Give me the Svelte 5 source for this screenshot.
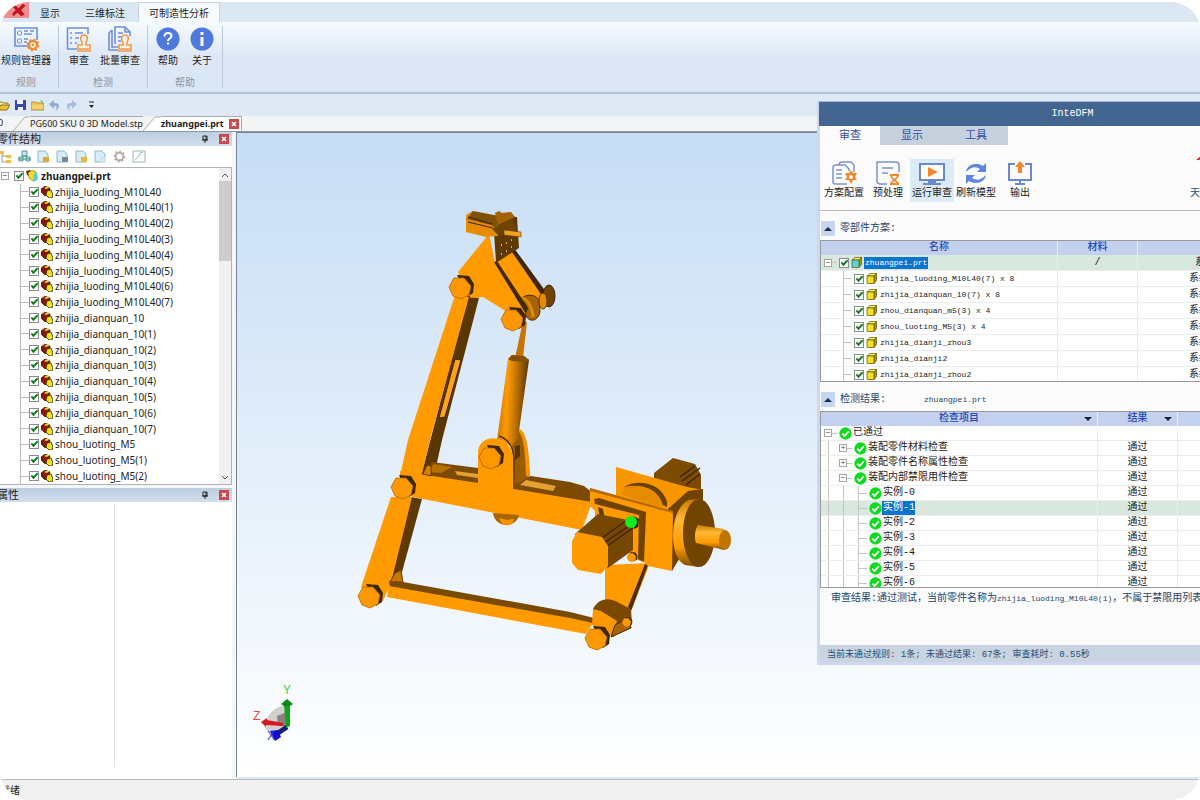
<script lang="ts">
  let ribbonTab = $state('可制造性分析');
  let dialogTab = $state('审查');
  let selectedPart = $state('zhuangpei.prt');
  let selectedItem = $state('实例-1');

  const ribbonGroups = [
    { name: '规则', tools: [{ label: '规则管理器', icon: 'rules' }] },
    {
      name: '检测',
      tools: [
        { label: '审查', icon: 'review' },
        { label: '批量审查', icon: 'batch' },
      ],
    },
    {
      name: '帮助',
      tools: [
        { label: '帮助', icon: 'help' },
        { label: '关于', icon: 'about' },
      ],
    },
  ];

  const numbered = (name: string, from: number, to: number) =>
    Array.from({ length: to - from + 1 }, (_, i) => (from + i === 0 ? name : `${name}(${from + i})`));

  const parts = [
    ...numbered('zhijia_luoding_M10L40', 0, 7),
    ...numbered('zhijia_dianquan_10', 0, 7),
    ...numbered('shou_luoting_M5', 0, 2),
  ];

  const schemes = [
    'zhijia_luoding_M10L40(7) x 8',
    'zhijia_dianquan_10(7) x 8',
    'zhou_dianquan_m5(3) x 4',
    'shou_luoting_M5(3) x 4',
    'zhijia_dianji_zhou3',
    'zhijia_dianji2',
    'zhijia_dianji_zhou2',
  ];

  const results = [
    { label: '已通过', level: 0, sign: '−', result: '' },
    { label: '装配零件材料检查', level: 1, sign: '+', result: '通过' },
    { label: '装配零件名称属性检查', level: 1, sign: '+', result: '通过' },
    { label: '装配内部禁限用件检查', level: 1, sign: '−', result: '通过' },
    ...[0, 1, 2, 3, 4, 5, 6].map((n) => ({ label: `实例-${n}`, level: 2, sign: '', result: '通过' })),
  ];

  const dialogTools = [
    { label: '方案配置', icon: 'config' },
    { label: '预处理', icon: 'prepare' },
    { label: '运行审查', icon: 'run' },
    { label: '刷新模型', icon: 'refresh' },
    { label: '输出', icon: 'output' },
  ];
</script>

{#snippet gear(x: number, y: number, hole: string)}
  <g transform="translate({x} {y})">
    <circle r="4" fill={hole} stroke="#f58a2b" stroke-width="2.4" />
    <circle r="5.4" fill="none" stroke="#f58a2b" stroke-width="1.8" stroke-dasharray="2.1 2.1" />
    <circle r="1.3" fill="#f58a2b" />
  </g>
{/snippet}

{#snippet stamp(x: number, y: number)}
  <path
    transform="translate({x} {y})"
    d="M1 15v-4h4V8C3 6 3 1 7 1s4 5 2 7v3h4v4zM0 17h14"
    fill="#fff3e6"
    stroke="#f29a4a"
    stroke-width="1.6"
  />
{/snippet}

{#snippet toolIcon(name: string)}
  <svg class="tool-icon" viewBox="0 0 26 26" width="26" height="26" fill="none" aria-hidden="true">
    {#if name === 'rules'}
      <path d="M15 20H2V2h22v12" stroke="#6d8fdc" stroke-width="1.6" />
      <rect x="4.500" y="5" width="4" height="4" rx="1" stroke="#6d8fdc" />
      <rect x="4.500" y="13" width="4" height="4" rx="1" stroke="#6d8fdc" />
      <path d="M11 5h4m2 0h4M11 8h8M11 13h4M11 16h3" stroke="#6d8fdc" stroke-width="1.4" />
      {@render gear(20, 19, '#fff')}
    {:else if name === 'review'}
      <path d="M11 23H1.500V2H22v6" stroke="#6d8fdc" stroke-width="1.6" />
      <path d="M4 7h2m3 0h8M4 12h2m3 0h4M4 17h2m3 0h2" stroke="#6d8fdc" stroke-width="1.5" />
      {@render stamp(11, 8)}
    {:else if name === 'batch'}
      <path d="M11 24H2V7l3-3M5 4v17h7M8 18V1h10l5 5v4M18 1v5h5" stroke="#6d8fdc" stroke-width="1.6" />
      <path d="M11 7h5M11 11h4M11 15h3" stroke="#6d8fdc" stroke-width="1.500" />
      {@render stamp(11, 8)}
    {:else if name === 'help'}
      <circle cx="13" cy="13" r="11.500" fill="#4f79dd" />
      <path d="M9.500 10.500c0-5 7-4.500 7-.5 0 2.500-3.500 2.500-3.500 5m0 1.500v2" stroke="#fff" stroke-width="2" />
    {:else if name === 'about'}
      <circle cx="13" cy="13" r="11.500" fill="#4f79dd" />
      <path d="M13 6v3m0 2v9" stroke="#fff" stroke-width="3" />
    {:else if name === 'config'}
      <path d="M16 24H4c-1.500 0-2-.5-2-2V8c0-2 1-3 3-3h9l4 4v2M8 5c0-2 1-3 3-3h9l3 3v7" stroke="#7d92cf" stroke-width="1.500" />
      <path d="M5 10h6M5 14h6M5 18h6" stroke="#7d92cf" stroke-width="1.400" />
      <path d="M20 10l2 3h4l-2 4 2 3h-4l-2 4-2-4h-4l2-3-2-4h4z" fill="#f5862a" />
      <circle cx="20" cy="17" r="2" fill="#fff" />
    {:else if name === 'prepare'}
      <path d="M12 24H5c-2 0-3-1-3-3V2h19c2 0 3 1 3 3v7" stroke="#7d92cf" stroke-width="1.500" />
      <path d="M7 8h11M7 13h6" stroke="#7d92cf" stroke-width="1.500" />
      <path d="M15 15h9M15 24h9M16 15c0 4 3 3 3 5s-3 1-3 4m7-9c0 4-3 3-3 5s3 1 3 4" stroke="#f5862a" stroke-width="1.800" />
    {:else if name === 'run'}
      <rect x="1" y="4" width="24" height="16" fill="#fff" stroke="#6d88d2" stroke-width="2" />
      <path d="M9 7l10 5-10 5z" fill="#f5862a" />
      <path d="M9 22h8M4 24h18" stroke="#6d88d2" stroke-width="2" />
    {:else if name === 'refresh'}
      <path d="M3 12C4 4 14 2 20 6l3-3v9h-9l3-3c-5-3-9-2-14 3zM23 15c-1 8-11 10-17 6l-3 3v-9h9l-3 3c5 3 9 2 14-3z" fill="#5d86e0" />
    {:else if name === 'output'}
      <path d="M8 4H2v16h22V4h-6" stroke="#6d88d2" stroke-width="2" />
      <path d="M8 24h10M13 20v4" stroke="#6d88d2" stroke-width="2" />
      <path d="M13 1l5 6h-3v6h-4V7H8z" fill="#f5862a" />
    {/if}
  </svg>
{/snippet}

{#snippet pin()}
  <svg viewBox="0 0 8 8" width="8" height="8" aria-hidden="true">
    <path d="M2 1h4v4H2zM1 5h6M4 5v3M5 1v4" fill="none" stroke="#222" />
  </svg>
{/snippet}

{#snippet cross()}
  <svg viewBox="0 0 10 10" width="10" height="10" aria-hidden="true">
    <path d="M3 3l4 4M7 3L3 7" stroke="#fff" stroke-width="1.6" />
  </svg>
{/snippet}

{#snippet panelHeader(title: string)}
  <header class="panel-header">
    <h2>{title}</h2>
    <button class="pin" aria-label="固定">{@render pin()}</button>
    <button class="close" aria-label="关闭">{@render cross()}</button>
  </header>
{/snippet}

{#snippet passed()}
  <svg viewBox="0 0 14 14" width="13" height="13" aria-hidden="true">
    <circle cx="7" cy="7" r="6.600" fill="#0cdc1c" />
    <path d="M3.500 7.200l2.500 2.400 4.600-5" fill="none" stroke="#fff" stroke-width="1.900" />
  </svg>
{/snippet}

{#snippet cube(front: string)}
  <svg viewBox="0 0 11 11" width="11" height="11" aria-hidden="true">
    <path d="M1 3l3-2.500h6.500L8 3z" fill="#fff36b" stroke="#5a5200" stroke-width=".7" />
    <path d="M8 3l2.500-2.500v7L8 10.500z" fill="#b59b00" stroke="#5a5200" stroke-width=".7" />
    <path d="M1 3h7v7.500H1z" fill={front} stroke="#5a5200" stroke-width=".7" />
  </svg>
{/snippet}

{#snippet bolt(x: number, y: number, r: number)}
  <g transform="translate({x} {y}) scale({r / 12})">
    <path d="M-4-12L8-11l5 8-1 9-6 4z" fill="#3d2500" />
    <path d="M-7-9L3-9 10-1 8 8 0 12-8 9-12 0z" fill="#fd9803" stroke="#b06a00" stroke-width=".8" />
  </g>
{/snippet}

<div class="app">
  <nav class="ribbon-tabs">
    <button class="app-button" aria-label="应用菜单">
      <svg viewBox="0 0 29 18" width="29" height="16" aria-hidden="true">
        <path d="M14 2l5 5 5-5 3 2-5 5 4 5-4 2-4-4-5 4-1-3 4-4-4-4z" fill="#c0141c" />
      </svg>
    </button>
    {#each ['显示', '三维标注', '可制造性分析'] as tab}
      <button class="ribbon-tab" class:active={ribbonTab === tab} onclick={() => (ribbonTab = tab)}>{tab}</button>
    {/each}
  </nav>

  <div class="ribbon">
    {#each ribbonGroups as group}
      <section class="ribbon-group">
        <div class="ribbon-tools">
          {#each group.tools as tool}
            <button class="tool">{@render toolIcon(tool.icon)}<span>{tool.label}</span></button>
          {/each}
        </div>
        <h2>{group.name}</h2>
      </section>
    {/each}
  </div>

  <div class="quick-bar">
    <button aria-label="打开">
      <svg viewBox="0 0 13 12" width="13" height="12"><path d="M1 11V3h4l1 1h5v2" fill="#ffe9a3" stroke="#8c7423" /><path d="M1 11l3-5h9l-3 5z" fill="#f1c232" stroke="#8c7423" /></svg>
    </button>
    <button aria-label="保存">
      <svg viewBox="0 0 13 12" width="13" height="12"><path d="M1 1h11v10H1z" fill="#3a48b4" /><path d="M3 1h6v4H3zM4 8h5v3H4z" fill="#eef" /></svg>
    </button>
    <button aria-label="打开文件夹">
      <svg viewBox="0 0 13 12" width="13" height="12"><path d="M0 3h5l1 1h7v7H0z" fill="#e9c65a" stroke="#a08438" stroke-width=".8" /><path d="M9 1l3 1-1 2z" fill="#7b5" /><path d="M1 6h11v4H1z" fill="#f3d272" /></svg>
    </button>
    <button aria-label="撤销">
      <svg viewBox="0 0 13 12" width="13" height="12"><path d="M6 1v3c6-1 7 5 1 8 3-4 2-5-1-5v3L1 5z" fill="#8fabd4" /></svg>
    </button>
    <button aria-label="重做">
      <svg viewBox="0 0 13 12" width="13" height="12"><path d="M7 1v3C1 3 0 9 6 12 3 8 4 7 7 7v3l5-5z" fill="#a9bddb" /></svg>
    </button>
    <button aria-label="更多" class="more">
      <svg viewBox="0 0 7 8" width="7" height="8"><path d="M1 1h5" stroke="#222" /><path d="M1 4h5L3.500 7z" fill="#222" /></svg>
    </button>
  </div>

  <div class="doc-tabs">
    <span class="doc-edge">0</span>
    <svg viewBox="0 0 16 15" width="18" height="15" aria-hidden="true"><path d="M0 15L12 1h4v14z" fill="#f3f3f3" /><path d="M0 15L12 1h4" fill="none" stroke="#aaa" /></svg>
    <button class="doc-tab">PG600 SKU 0 3D Model.stp</button>
    <svg viewBox="0 0 18 15" width="18" height="15" aria-hidden="true"><path d="M0 0h18v15H0z" fill="#f3f3f3" /><path d="M0 15L12 1h6v14z" fill="#fff" /><path d="M0 15L12 1h6" fill="none" stroke="#aaa" /></svg>
    <button class="doc-tab active">zhuangpei.prt</button>
    <span class="doc-close"><button class="close" aria-label="关闭">{@render cross()}</button></span>
  </div>

  <main>
    <aside>
      {@render panelHeader('零件结构')}
      <div class="panel-tools">
        <button aria-label="结构树"><svg viewBox="0 0 13 13" width="13" height="13"><path d="M0 1h5v3H0zM7 5h5v3H7zM7 10h5v3H7z" fill="#f0bc3c" /><path d="M3 4v8h4M3 6h4" fill="none" stroke="#999" /></svg></button>
        <button aria-label="装配"><svg viewBox="0 0 13 13" width="13" height="13"><path d="M4 1h5v5H4zM1 7h4v4H1zM8 7h4v4H8z" fill="#cfe8ee" stroke="#4c93b0" /><path d="M4 6h5M0 9h13" stroke="#3b9a6b" /></svg></button>
        {#each ['#e0a730', '#7a8a96', '#f0b83a', '#cfe6f0'] as mark}
          <button aria-label="文档"><svg viewBox="0 0 13 13" width="13" height="13"><path d="M1 1h7l3 3v8H1z" fill="#d7edf6" stroke="#8fb9cc" /><path d="M6 7h6v5H6z" fill={mark} /></svg></button>
        {/each}
        <button aria-label="设置"><svg viewBox="0 0 13 13" width="13" height="13"><circle cx="6.500" cy="6.500" r="3.800" fill="none" stroke="#b9aea6" stroke-width="2" /><circle cx="6.500" cy="6.500" r="5.300" fill="none" stroke="#b9aea6" stroke-width="1.400" stroke-dasharray="2 2" /></svg></button>
        <button aria-label="曲线"><svg viewBox="0 0 14 13" width="14" height="13"><path d="M1 1h12v11H1z" fill="#fff" stroke="#9bb5ae" /><path d="M3 10l4-4 1-3 3-1" fill="none" stroke="#8cb" /></svg></button>
      </div>

      <div class="tree-box">
        <ul class="tree">
          <li class="root">
            <button class="expander" aria-label="折叠">−</button>
            <label>
              <input type="checkbox" checked />
              <svg viewBox="0 0 13 12" width="13" height="12" aria-hidden="true"><path d="M0 1l4-1 2 3-3 3-2-1z" fill="#4a3a12" /><path d="M2 3l4-3 4 2v6l-3 3-4-3z" fill="#ffd928" stroke="#7b6700" stroke-width=".6" /><path d="M7 5l4-3 1 7-4 3z" fill="#54cfd4" /></svg>
              <span>zhuangpei.prt</span>
            </label>
          </li>
          {#each parts as part}
            <li>
              <label>
                <input type="checkbox" checked />
                <svg viewBox="0 0 12 12" width="12" height="12" aria-hidden="true"><path d="M0 3l4-3 5 2-1 5-4 3-4-4z" fill="#8a1608" stroke="#2b0500" stroke-width=".6" /><path d="M3 2l4-2 1 2-3 1z" fill="#e8d62a" /><path d="M6 5l4-1 2 5-1 3H8L5 9z" fill="#f2e02a" stroke="#3b3300" stroke-width=".9" /></svg>
                <span>{part}</span>
              </label>
            </li>
          {/each}
        </ul>
        <div class="scrollbar">
          <button aria-label="向上">
            <svg viewBox="0 0 8 6" width="8" height="6"><path d="M1 5l3-3 3 3" fill="none" stroke="#555" /></svg>
          </button>
          <div class="thumb"></div>
          <button aria-label="向下">
            <svg viewBox="0 0 8 6" width="8" height="6"><path d="M1 1l3 3 3-3" fill="none" stroke="#555" /></svg>
          </button>
        </div>
      </div>

      {@render panelHeader('属性')}
      <div class="properties"><div></div><div></div></div>
    </aside>

    <section class="viewport">
      <!-- Linkage assembly -->
      <svg class="model" viewBox="350 200 390 460" width="390" height="460" role="img" aria-label="zhuangpei.prt">
        <defs>
          <linearGradient id="tube" x1="0" x2="1" y1="0" y2=".1">
            <stop offset="0" stop-color="#b96f00" />
            <stop offset=".35" stop-color="#ff9a00" />
            <stop offset=".6" stop-color="#c87800" />
            <stop offset="1" stop-color="#5a3600" />
          </linearGradient>
          <linearGradient id="rim" x1="0" x2="0" y1="0" y2="1">
            <stop offset="0" stop-color="#c97a00" />
            <stop offset=".3" stop-color="#ffb836" />
            <stop offset=".7" stop-color="#ff9a00" />
            <stop offset="1" stop-color="#7d4b00" />
          </linearGradient>
        </defs>

        <!-- Upper left arm -->
        <path d="M468 296l11 2-37 142-8 36h-13z" fill="#5a3700" />
        <path d="M455 295l14 2-39 143-9 38-21-2 8-36z" fill="#ff9a00" />
        <path d="M455 359l6 1-16 57-6 1z" fill="#ffa41a" stroke="#3d2500" />

        <!-- Lower left arm -->
        <path d="M411 497l11 2-20 73v9l-14 1z" fill="#5f3a00" />
        <path d="M391 497h21l-21 86-8 18-22-14z" fill="#ff9a00" />
        <path d="M390 582l5-9 6-3 2 12z" fill="#c77700" stroke="#4a2c00" stroke-width=".8" />

        <!-- Bottom rod -->
        <path d="M389 581l14 1 167 30 24 6v6l-204-37z" fill="#7a4a00" />
        <path d="M389 586l181 32 23 5-7 11-199-37z" fill="#ff9a00" />

        <!-- Cross beam -->
        <path d="M432 462l46 6 92 14 14 4 10 8-2 10-172-28z" fill="#7c4b00" />
        <path d="M434 464l18 3-11 6-14-1z" fill="#b87000" />
        <path d="M400 471l78 12 114 19-10 28-169-33-13-8z" fill="#ff9a00" />
        <path d="M455 471l23 3v4l-21-3zM526 480l30 6-3 5-33-6z" fill="#e5a032" />
        <path d="M423 474l4-9 4 1v10z" fill="#d98200" stroke="#4a2c00" stroke-width=".8" />
        <path d="M493 513c2 15 23 16 26 2z" fill="#a96500" />
        <path d="M499 518l8 2 7-1c-1 8-12 9-15-1z" fill="#f59300" />

        <!-- Beam bracket and hydraulic cylinder -->
        <path d="M511 435c6-8 14-2 16 10l3 32-16 8z" fill="#9a5c00" />
        <path d="M519 429c7 2 10 16 11 48l-4-1c-1-30-3-42-9-46z" fill="#f79400" />
        <path d="M523 321l4 1-4 36h-8z" fill="#c57600" />
        <path d="M508 359l4-4 12 1 5 4-11 78-6 8-15-6z" fill="url(#tube)" />
        <path d="M508 359l4-4 12 1 5 4-3 2-14-1z" fill="#855000" />
        <path d="M478 496v-45c2-17 29-18 35 4l2 41z" fill="#ff9a00" />
        <path d="M499 436c9 3 14 10 15 22v31" fill="none" stroke="#5a3700" stroke-width="1.4" />
        <path d="M515 446l5-1v11l-5 4z" fill="#543300" />
        {@render bolt(491, 457, 12)}

        <!-- Head plates -->
        <path d="M497 263l16-14 33 49-10 15-20-15z" fill="#ff9a00" />
        <path d="M514 248l35 48-4 4-33-48z" fill="#3f2700" />
        <path d="M519 301c4-7 16-8 20-1l1 12c-2 9-10 11-14 4z" fill="#a86400" stroke="#4a2c00" />
        <path d="M522 298c3 0 10 6 11 19" fill="none" stroke="#e08a08" stroke-width="3" />
        <ellipse cx="549" cy="296" rx="6" ry="11" fill="#704300" stroke="#3d2500" />
        <ellipse cx="543" cy="301" rx="4" ry="8" fill="#e88b00" stroke="#5a3700" />
        <path d="M489 234l6 28 32 50-10 6-34-21-12 1-13-26z" fill="#ff9a00" />
        <path d="M494 262l3-1 31 47-2 6z" fill="#3f2700" />
        <path d="M494 232l6-16 17 1 2 31-23 15z" fill="#5e3a00" />
        <path d="M466 215l7-4 25 10v15l-12 1-20-5z" fill="#e78b00" />
        <path d="M467 219l6-8 26 5-2 13-6-4z" fill="#805000" />
        <path d="M468 217l24 7M468 222l25 6" stroke="#362000" />
        <path d="M495 213l4-2 3 2 9-1 4 5-17 8z" fill="#a46200" />
        <path d="M492 229l20-10 5 11-19 5z" fill="#6f4300" />
        <path d="M504 230l17 2v5l-17-2z" fill="#f2a022" stroke="#694000" stroke-width=".6" />
        <path d="M501 245h1m4-2h1m4-3h1M501 254h1m4-3h1m4-4h1" stroke="#e9a847" stroke-width="2" />
        {@render bolt(461, 287, 12)}
        {@render bolt(513, 319, 12)}
        {@render bolt(403, 487, 12)}
        {@render bolt(370, 596, 12)}

        <!-- Drive unit -->
        <path d="M654 473l19-15 22 6 6 11v15l-17 6-30-7z" fill="#7c4b00" />
        <path d="M680 477l15-11M682 481l18-13M686 485l14-11" stroke="#3a2300" stroke-width="1.5" />
        <path d="M616 467l71 20 16 3-30 24-57-18z" fill="#f89600" />
        <path d="M624 487c14-9 37-4 43 15l-5 5-40-12z" fill="#e68b00" />
        <path d="M624 487c14-9 38-4 43 15v5l-4-2c-5-16-20-22-39-18z" fill="#6b4100" />
        <path d="M668 509l20-18 15-2v30l-31 52z" fill="#704300" />
        <path d="M605 565l45-2-18 46-27-9z" fill="#ff9a00" />
        <path d="M648 565l-17 46-3-4 17-43z" fill="#4a2d00" />
        <path d="M590 488l83 23-1 60-24-5-58-60z" fill="#ff9a00" />
        <path d="M590 488l83 23v2l-83-22z" fill="#b36a00" />
        <path d="M699 499l-10 1c-20 8-21 58-4 65l14 2z" fill="url(#rim)" />
        <ellipse cx="699" cy="533" rx="16" ry="34" fill="#714400" />
        <path d="M698 525l26 4v21l-28-7c-2-5-1-14 2-18z" fill="url(#rim)" />
        <ellipse cx="725" cy="540" rx="6" ry="10" fill="#c27400" />
        <path d="M595 499l50 13-2 50-8-3-40-40z" fill="#ff9a00" />
        <path d="M594 499l5-1 47 14-7 3-44-11zM639 514l7-2-2 50-6-3z" fill="#704300" />
        <path d="M598 507l5 2 1 6-4 3z" fill="#603a00" />
        <path d="M575 534l23-20 35 7v29l-25 18-20-14z" fill="#764700" />
        <path d="M602 538l28-20M604 543l29-20M606 547l27-19" stroke="#3c2400" stroke-width="1.4" />
        <path d="M577 532l25 5 6 9v20l-7 8-23-4-6-7v-22z" fill="#ff9a00" />
        <path d="M633 516l6 3-1 8-4 2z" fill="#2d1c00" />
        <circle cx="631" cy="522" r="6" fill="#10ed1c" />
        {@render bolt(632, 557, 5)}

        <!-- Lower joint -->
        <path d="M593 609c5-10 15-13 26-6l12 6 1 15-19 13-19-15z" fill="#794900" />
        <path d="M593 609l8 2 16 10-5 15-20-11z" fill="#fd9800" />
        <path d="M615 625l14-7 2 10-20 9z" fill="#a86400" stroke="#4a2c00" />
        {@render bolt(627, 622, 5)}
        {@render bolt(597, 638, 12)}
      </svg>

      <svg class="axes" viewBox="250 682 46 62" width="46" height="62" aria-hidden="true">
        <path d="M265 726c2-14 12-20 22-21v21l-11 7c-6 0-10-2-11-7z" fill="#d0d0d0" />
        <path d="M277 716l10-4v14h-9z" fill="#8f7f85" />
        <path d="M287 727l-9 6" stroke="#1c1c78" stroke-width="5" />
        <path d="M270 731l8-1 3 7-6 4z" fill="#0d0dd0" />
        <path d="M284 705h6v21l-4 2z" fill="#0fa51a" />
        <path d="M281 704l6-5 6 5-3 2h-6z" fill="#0b8a15" />
        <path d="M261 722l6-4v2l16 3v3l-17-1v2z" fill="#d41a1a" />
        <text x="283" y="694" fill="#35d23a">Y</text>
        <text x="253" y="720" fill="#e24545">Z</text>
        <text x="267" y="740" fill="#4040e0">X</text>
      </svg>
    </section>
  </main>

  <footer class="status">就绪</footer>

  <div class="dialog" role="dialog" aria-label="InteDFM">
    <header class="dialog-title">InteDFM</header>
    <nav class="dialog-tabs">
      {#each ['审查', '显示', '工具'] as tab}
        <button class:active={dialogTab === tab} onclick={() => (dialogTab = tab)}>{tab}</button>
      {/each}
    </nav>
    <div class="dialog-tools">
      {#each dialogTools as tool}
        <button class="tool" class:hot={tool.icon === 'run'}>{@render toolIcon(tool.icon)}<span>{tool.label}</span></button>
      {/each}
      <button class="tool brand">
        <svg class="tool-icon" viewBox="0 0 26 26" width="26" height="26" aria-hidden="true"><path d="M14 0q4-4 12-8v6q-6 0-9 2z" fill="#d8262c" /></svg>
        <span>天</span>
      </button>
    </div>

    <div class="section-head">
      <button aria-label="收起"><svg viewBox="0 0 8 6" width="8" height="6"><path d="M4 1l4 4H0z" fill="#1d2c4c" /></svg></button>
      <h2>零部件方案:</h2>
    </div>
    <div class="grid-box schemes">
      <table>
        <thead>
          <tr><th class="c-name">名称</th><th class="c-material">材料</th><th></th></tr>
        </thead>
        <tbody>
          <tr class:selected={selectedPart === 'zhuangpei.prt'} onclick={() => (selectedPart = 'zhuangpei.prt')}>
            <td>
              <div class="node">
                <button class="expander" aria-label="折叠">−</button>
                <i class="dash"></i>
                <label><input type="checkbox" checked />{@render cube('#57d6d8')}<span class="mono">zhuangpei.prt</span></label>
              </div>
            </td>
            <td class="center">/</td>
            <td class="scheme top">系统</td>
          </tr>
          {#each schemes as name}
            <tr class:selected={selectedPart === name} onclick={() => (selectedPart = name)}>
              <td>
                <div class="node child">
                  <i class="branch"></i>
                  <label><input type="checkbox" checked />{@render cube('#f3df22')}<span class="mono">{name}</span></label>
                </div>
              </td>
              <td></td>
              <td class="scheme">系统</td>
            </tr>
          {/each}
        </tbody>
      </table>
    </div>

    <div class="section-head">
      <button aria-label="收起"><svg viewBox="0 0 8 6" width="8" height="6"><path d="M4 1l4 4H0z" fill="#1d2c4c" /></svg></button>
      <h2>检测结果:</h2>
      <span class="mono">zhuangpei.prt</span>
    </div>
    <div class="grid-box results">
      <table>
        <thead>
          <tr>
            <th class="c-item">检查项目<svg viewBox="0 0 8 4" width="8" height="4"><path d="M0 0h8L4 4z" fill="#1b2440" /></svg></th>
            <th class="c-result">结果<svg viewBox="0 0 8 4" width="8" height="4"><path d="M0 0h8L4 4z" fill="#1b2440" /></svg></th>
            <th></th>
          </tr>
        </thead>
        <tbody>
          {#each results as row}
            <tr class:selected={selectedItem === row.label} onclick={() => (selectedItem = row.label)}>
              <td>
                <div class="node">
                  {#each { length: row.level } as _}<i class="guide"></i>{/each}
                  {#if row.sign}
                    <button class="expander" aria-label="展开或折叠">{row.sign}</button><i class="dash"></i>
                  {:else}
                    <i class="branch"></i>
                  {/if}
                  {@render passed()}<span class="label">{row.label}</span>
                </div>
              </td>
              <td class="center">{row.result}</td>
              <td></td>
            </tr>
          {/each}
        </tbody>
      </table>
    </div>

    <p class="message">
      <span>审查结果:通过测试，当前零件名称为</span>
      <span class="mono">zhijia_luoding_M10L40(1)</span>
      <span>，不属于禁限用列表中零件</span>
    </p>
    <footer class="dialog-status">当前未通过规则: 1条; 未通过结果: 67条; 审查耗时: 0.55秒</footer>
  </div>
</div>

<style>
  :global(body) {
    margin: 0;
    background: #fff;
  }
  .app {
    position: relative;
    display: flex;
    flex-direction: column;
    box-sizing: border-box;
    height: 100vh;
    overflow: hidden;
    border-top: 2px solid #fff;
    border-radius: 30px;
    background: #dfe9f5;
    color: #1d1d1d;
    font: 10px/14px "Noto Sans", "Noto Sans CJK SC", sans-serif;
  }
  button {
    display: flex;
    align-items: center;
    justify-content: center;
    margin: 0;
    padding: 0;
    border: 0;
    background: none;
    color: inherit;
    font: inherit;
    white-space: nowrap;
    cursor: pointer;
  }
  h2,
  p {
    margin: 0;
    font: inherit;
  }
  svg {
    flex: none;
  }
  .mono {
    font: 8px/12px "Liberation Mono", monospace;
  }

  /* Ribbon */
  .ribbon-tabs {
    display: flex;
    flex: none;
    height: 20px;
    background: #dce7f4;
  }
  .app-button {
    width: 29px;
    height: 16px;
    background: #f08f8f;
  }
  .ribbon-tab {
    padding: 0 10px;
    border: 1px solid transparent;
    border-bottom: 0;
  }
  .ribbon-tab:nth-of-type(3) {
    margin: 0 2px 0 3px;
  }
  .ribbon-tab.active {
    border-color: #c4d3e6;
    background: #f6fafe;
  }
  .ribbon {
    display: flex;
    flex: none;
    height: 70px;
    border-bottom: 2px solid #b3c1d1;
    background: linear-gradient(#f5fbff, #dde7f5 50%, #dbe6f4);
  }
  .ribbon-group {
    display: flex;
    flex-direction: column;
    align-items: center;
    justify-content: space-between;
    margin: 4px 0;
    padding: 0 7px;
    border-right: 1px solid #b9c8da;
  }
  .ribbon-group:first-child {
    padding: 0 7px 0 1px;
  }
  .ribbon-tools {
    display: flex;
    gap: 8px;
  }
  .ribbon-group h2 {
    color: #8794a6;
    line-height: 12px;
  }
  .tool {
    flex-direction: column;
    min-width: 26px;
  }
  .tool span {
    line-height: 16px;
  }
  .quick-bar {
    display: flex;
    flex: none;
    align-items: center;
    gap: 4px;
    height: 22px;
    margin-left: -3px;
  }
  .more {
    margin-left: 6px;
  }

  /* Document tabs */
  .doc-tabs {
    display: flex;
    flex: none;
    height: 15px;
    border-bottom: 1px solid #8d97a5;
    background: #f3f4f6;
    font-size: 9px;
  }
  .doc-edge {
    width: 14px;
    margin-left: -2px;
  }
  .doc-tab {
    border-top: 1px solid #aaa;
    background: #f3f3f3;
  }
  .doc-tab.active {
    background: #fff;
    font-weight: 700;
  }
  .doc-close {
    display: flex;
    align-items: center;
    padding: 0 2px 0 5px;
    border-top: 1px solid #aaa;
    border-right: 1px solid #aaa;
    background: #fff;
  }
  .close {
    width: 10px;
    height: 10px;
    background: #c8484f;
  }

  /* Left panels */
  main {
    display: flex;
    flex: 1;
    min-height: 0;
  }
  aside {
    display: flex;
    flex: none;
    flex-direction: column;
    width: 232px;
    padding-right: 4px;
    background: #f3f7fb;
  }
  .panel-header {
    display: flex;
    flex: none;
    align-items: center;
    gap: 10px;
    height: 14px;
    padding-right: 3px;
    background: linear-gradient(#bccee1, #d2deeb);
  }
  .panel-header h2 {
    flex: 1;
    margin-left: -3px;
    font-size: 11px;
  }
  .panel-tools {
    display: flex;
    flex: none;
    align-items: center;
    gap: 6px;
    height: 21px;
    padding-right: 1px;
    margin-left: -1px;
    background: #fff;
  }
  .tree-box {
    display: flex;
    flex: none;
    height: 316px;
    margin-bottom: 3px;
    border: 1px solid #b4b4b4;
    border-left: 0;
    background: #fff;
  }
  .tree {
    display: flex;
    flex: 1;
    flex-direction: column;
    margin: 0;
    padding: 0;
    list-style: none;
  }
  .tree li {
    display: flex;
    flex: 1;
    align-items: center;
    min-height: 0;
    margin-left: 20px;
    border-left: 1px solid #bbb;
  }
  .tree li::before {
    width: 8px;
    border-top: 1px solid #bbb;
    content: "";
  }
  .tree li.root {
    margin-left: 0;
    border-left: 0;
    font-weight: 700;
  }
  .tree li.root::before {
    content: none;
  }
  .tree label {
    display: flex;
    align-items: center;
    gap: 2px;
  }
  .tree label span {
    line-height: 14px;
    white-space: nowrap;
  }
  .tree .root label {
    margin-left: 5px;
  }
  input[type="checkbox"] {
    display: grid;
    flex: none;
    place-content: center;
    width: 10px;
    height: 10px;
    margin: 0;
    border: 1px solid #8c8c8c;
    background: #fff;
    appearance: none;
  }
  input[type="checkbox"]:checked::before {
    width: 5px;
    height: 2px;
    border: solid #177d22;
    border-width: 0 0 2px 2px;
    transform: translateY(-1px) rotate(-45deg);
    content: "";
  }
  .expander {
    flex: none;
    width: 8px;
    height: 8px;
    border: 1px solid #a5a5a5;
    background: #fff;
    color: #444;
    font: 8px/6px "Liberation Sans", sans-serif;
  }
  .tree .expander {
    margin-left: 1px;
  }
  .scrollbar {
    display: flex;
    flex-direction: column;
    width: 12px;
    background: #f0f0f0;
  }
  .scrollbar button {
    height: 13px;
  }
  .thumb {
    height: 80px;
    margin-bottom: auto;
    background: #cdcdcd;
  }
  .properties {
    display: flex;
    flex: 1;
    padding: 2px 0 12px;
    background: #fff;
  }
  .properties div:first-child {
    width: 49%;
    border-right: 1px solid #e2e2e2;
  }

  /* 3D view */
  .viewport {
    position: relative;
    flex: 1;
    margin-bottom: 2px;
    border-top: 1px solid #78848f;
    border-left: 1px solid #78848f;
    background: linear-gradient(#c6ddf5, #fff);
  }
  .model {
    position: absolute;
    top: 67px;
    left: 113px;
  }
  .axes {
    position: absolute;
    bottom: 33px;
    left: 13px;
    font: 12px "Liberation Sans", sans-serif;
  }
  .status {
    flex: none;
    height: 20px;
    border-top: 1px solid #bcbcbc;
    background: #f0f0f0;
    line-height: 20px;
  }

  /* InteDFM window */
  .dialog {
    position: absolute;
    top: 99px;
    left: 817px;
    display: flex;
    flex-direction: column;
    width: 512px;
    box-sizing: border-box;
    border: 3px solid #cfd6f2;
    border-top: 1px solid #a9b4e0;
    background: #fbfbfb;
    font-family: "Liberation Mono", "Noto Sans CJK SC", monospace;
  }
  .dialog-title {
    height: 24px;
    margin-left: -1px;
    background: #42668f;
    color: #fff;
    line-height: 24px;
    text-align: center;
  }
  .dialog-tabs {
    display: flex;
    height: 19px;
    color: #2c4da8;
    font-size: 11px;
  }
  .dialog-tabs button {
    width: 64px;
    background: #c6d1dd;
  }
  .dialog-tabs button.active {
    width: 60px;
    background: none;
  }
  .dialog-tools {
    display: flex;
    align-items: flex-start;
    height: 51px;
    padding: 14px 0 0 2px;
    border-bottom: 1px solid #bdbdbd;
  }
  .dialog-tools .tool {
    width: 44px;
    height: 43px;
    color: #222;
  }
  .dialog-tools .tool.hot {
    background: #dcebf8;
  }
  .dialog-tools .brand {
    margin-left: 131px;
    color: #23507f;
  }
  .brand svg {
    overflow: visible;
  }
  .section-head {
    display: flex;
    align-items: center;
    gap: 5px;
    margin: 10px 0 4px 1px;
    color: #24456b;
  }
  .section-head h2 {
    line-height: 15px;
  }
  .section-head button {
    width: 14px;
    height: 15px;
    background: #c6d5f0;
  }
  .section-head .mono {
    margin-left: 33px;
  }
  .grid-box {
    overflow: hidden;
    border: 1px solid #9a9a9a;
    border-right: 0;
    background: #fff;
  }
  .schemes {
    height: 140px;
  }
  .schemes table {
    height: 141px;
  }
  .results {
    height: 175px;
  }
  table {
    width: 100%;
    border-spacing: 0;
    table-layout: fixed;
  }
  th,
  td {
    padding: 0;
    border-right: 1px solid #e8edf2;
    overflow: hidden;
    line-height: 14px;
    white-space: nowrap;
  }
  td {
    border-bottom: 1px solid #ececec;
  }
  th {
    background: #c3d1ef;
    color: #2547b5;
    font-weight: 500;
  }
  .c-name {
    width: 236px;
  }
  .c-material {
    width: 79px;
  }
  .c-item {
    width: 276px;
  }
  .c-result {
    width: 79px;
  }
  th svg {
    float: right;
    margin: 5px 5px 0 -13px;
  }
  .center {
    text-align: center;
  }
  .scheme {
    padding-left: 51px;
  }
  .scheme.top {
    padding-left: 57px;
  }
  .selected td {
    background: #d8e8de;
  }
  .node {
    display: flex;
    align-items: center;
    height: 14px;
    padding-left: 3px;
  }
  .schemes .node {
    height: 15px;
  }
  .node label {
    display: flex;
    align-items: center;
    gap: 2px;
  }
  .node .mono {
    padding: 0 1px;
  }
  .node .label {
    padding-left: 1px;
  }
  .selected .mono,
  .selected .label {
    background: #0a74d0;
    color: #fff;
  }
  .node.child {
    padding-left: 22px;
  }
  .guide,
  .branch {
    flex: none;
    align-self: stretch;
    width: 10px;
    border-left: 1px solid #c4c4c4;
  }
  .guide,
  .guide + .branch {
    margin-left: 4px;
  }
  .branch {
    background: linear-gradient(#c4c4c4, #c4c4c4) 0 50% / 8px 1px no-repeat;
  }
  .dash {
    width: 5px;
    margin-right: 2px;
    border-top: 1px solid #c4c4c4;
  }
  .message {
    display: flex;
    align-items: baseline;
    height: 55px;
    padding: 2px 0 0 11px;
    overflow: hidden;
    color: #24456b;
    line-height: 18px;
    white-space: nowrap;
  }
  .dialog-status {
    height: 17px;
    padding-left: 7px;
    background: #c8d4df;
    color: #1f4d78;
    font-size: 9px;
    line-height: 20px;
  }
</style>
